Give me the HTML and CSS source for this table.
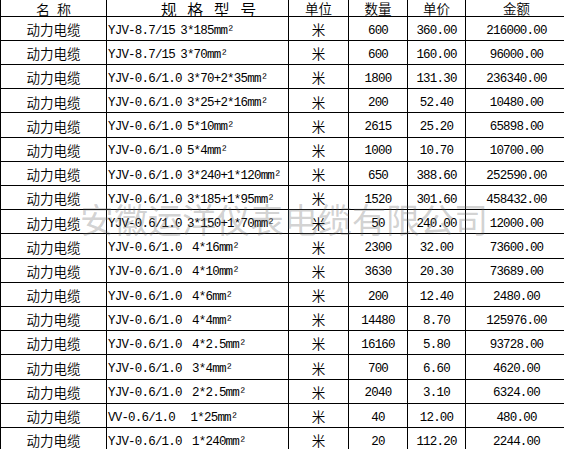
FILE: index.html
```html
<!DOCTYPE html>
<html lang="zh">
<head>
<meta charset="utf-8">
<title>电缆报价表</title>
<link rel="stylesheet" href="styles.css">
</head>
<body>
<div class="page">
  <div class="sheet">
    <div class="row head">
      <div class="cell cjk h-name">名 称</div>
      <div class="cell cjk h-spec">规 格 型 号</div>
      <div class="cell cjk">单位</div>
      <div class="cell cjk">数量</div>
      <div class="cell cjk">单价</div>
      <div class="cell cjk">金额</div>
    </div>
    <div class="row"><div class="cell cjk">动力电缆</div><div class="cell spec">YJV-8.7/15 3*185mm²</div><div class="cell cjk">米</div><div class="cell num">600</div><div class="cell num">360.00</div><div class="cell num">216000.00</div></div>
    <div class="row"><div class="cell cjk">动力电缆</div><div class="cell spec">YJV-8.7/15 3*70mm²</div><div class="cell cjk">米</div><div class="cell num">600</div><div class="cell num">160.00</div><div class="cell num">96000.00</div></div>
    <div class="row"><div class="cell cjk">动力电缆</div><div class="cell spec">YJV-0.6/1.0 3*70+2*35mm²</div><div class="cell cjk">米</div><div class="cell num">1800</div><div class="cell num">131.30</div><div class="cell num">236340.00</div></div>
    <div class="row"><div class="cell cjk">动力电缆</div><div class="cell spec">YJV-0.6/1.0 3*25+2*16mm²</div><div class="cell cjk">米</div><div class="cell num">200</div><div class="cell num">52.40</div><div class="cell num">10480.00</div></div>
    <div class="row"><div class="cell cjk">动力电缆</div><div class="cell spec">YJV-0.6/1.0 5*10mm²</div><div class="cell cjk">米</div><div class="cell num">2615</div><div class="cell num">25.20</div><div class="cell num">65898.00</div></div>
    <div class="row"><div class="cell cjk">动力电缆</div><div class="cell spec">YJV-0.6/1.0 5*4mm²</div><div class="cell cjk">米</div><div class="cell num">1000</div><div class="cell num">10.70</div><div class="cell num">10700.00</div></div>
    <div class="row"><div class="cell cjk">动力电缆</div><div class="cell spec">YJV-0.6/1.0 3*240+1*120mm²</div><div class="cell cjk">米</div><div class="cell num">650</div><div class="cell num">388.60</div><div class="cell num">252590.00</div></div>
    <div class="row"><div class="cell cjk">动力电缆</div><div class="cell spec">YJV-0.6/1.0 3*185+1*95mm²</div><div class="cell cjk">米</div><div class="cell num">1520</div><div class="cell num">301.60</div><div class="cell num">458432.00</div></div>
    <div class="row"><div class="cell cjk">动力电缆</div><div class="cell spec">YJV-0.6/1.0 3*150+1*70mm²</div><div class="cell cjk">米</div><div class="cell num">50</div><div class="cell num">240.00</div><div class="cell num">12000.00</div></div>
    <div class="row"><div class="cell cjk">动力电缆</div><div class="cell spec">YJV-0.6/1.0  4*16mm²</div><div class="cell cjk">米</div><div class="cell num">2300</div><div class="cell num">32.00</div><div class="cell num">73600.00</div></div>
    <div class="row"><div class="cell cjk">动力电缆</div><div class="cell spec">YJV-0.6/1.0  4*10mm²</div><div class="cell cjk">米</div><div class="cell num">3630</div><div class="cell num">20.30</div><div class="cell num">73689.00</div></div>
    <div class="row"><div class="cell cjk">动力电缆</div><div class="cell spec">YJV-0.6/1.0  4*6mm²</div><div class="cell cjk">米</div><div class="cell num">200</div><div class="cell num">12.40</div><div class="cell num">2480.00</div></div>
    <div class="row"><div class="cell cjk">动力电缆</div><div class="cell spec">YJV-0.6/1.0  4*4mm²</div><div class="cell cjk">米</div><div class="cell num">14480</div><div class="cell num">8.70</div><div class="cell num">125976.00</div></div>
    <div class="row"><div class="cell cjk">动力电缆</div><div class="cell spec">YJV-0.6/1.0  4*2.5mm²</div><div class="cell cjk">米</div><div class="cell num">16160</div><div class="cell num">5.80</div><div class="cell num">93728.00</div></div>
    <div class="row"><div class="cell cjk">动力电缆</div><div class="cell spec">YJV-0.6/1.0  3*4mm²</div><div class="cell cjk">米</div><div class="cell num">700</div><div class="cell num">6.60</div><div class="cell num">4620.00</div></div>
    <div class="row"><div class="cell cjk">动力电缆</div><div class="cell spec">YJV-0.6/1.0  2*2.5mm²</div><div class="cell cjk">米</div><div class="cell num">2040</div><div class="cell num">3.10</div><div class="cell num">6324.00</div></div>
    <div class="row"><div class="cell cjk">动力电缆</div><div class="cell spec">VV-0.6/1.0   1*25mm²</div><div class="cell cjk">米</div><div class="cell num">40</div><div class="cell num">12.00</div><div class="cell num">480.00</div></div>
    <div class="row"><div class="cell cjk">动力电缆</div><div class="cell spec">YJV-0.6/1.0  1*240mm²</div><div class="cell cjk">米</div><div class="cell num">20</div><div class="cell num">112.20</div><div class="cell num">2244.00</div></div>
  </div>
  <div class="watermark">安徽运洋仪表电缆有限公司</div>
</div>
</body>
</html>
```

FILE: styles.css
```css
html, body {
  margin: 0;
  padding: 0;
  overflow: hidden;
  background: #fff;
}

.page {
  position: relative;
  width: 564px;
  height: 449px;
  overflow: hidden;
}

.sheet {
  display: grid;
  grid-template-columns: 106px 182px 60px 59px 58px 102px;
  grid-auto-rows: 24.2px;
  width: 568px;
  margin-top: -7.5px;
  border-left: 1px solid #000;
  color: #000;
}

.row {
  display: contents;
}

.cell {
  box-sizing: border-box;
  border-right: 1px solid #000;
  border-bottom: 1px solid #000;
  display: flex;
  align-items: center;
  justify-content: center;
  padding-top: 3px;
  white-space: pre;
  overflow: hidden;
}

.cjk {
  font-family: "Noto Sans CJK SC", "Noto Sans", sans-serif;
  font-size: 13.5px;
  font-weight: 350;
  line-height: 1;
}

.head .cell {
  padding-top: 10px;
}

.head .h-name {
  font-size: 14px;
  word-spacing: 4px;
}

.head .h-spec {
  font-size: 16px;
  word-spacing: 7px;
  padding-left: 22px;
}

.spec,
.num {
  font-family: "Liberation Mono", "DejaVu Sans Mono", monospace;
  font-size: 12.5px;
  letter-spacing: -0.8px;
  word-spacing: -1.5px;
  line-height: 1;
  padding-top: 5px;
}

.spec {
  justify-content: flex-start;
  padding-left: 1px;
}

.watermark {
  position: absolute;
  left: 80px;
  top: 202px;
  font-family: "Noto Sans CJK SC", sans-serif;
  font-size: 34px;
  font-weight: 400;
  line-height: 1;
  color: rgba(100, 100, 100, 0.3);
  white-space: nowrap;
  pointer-events: none;
}
```
